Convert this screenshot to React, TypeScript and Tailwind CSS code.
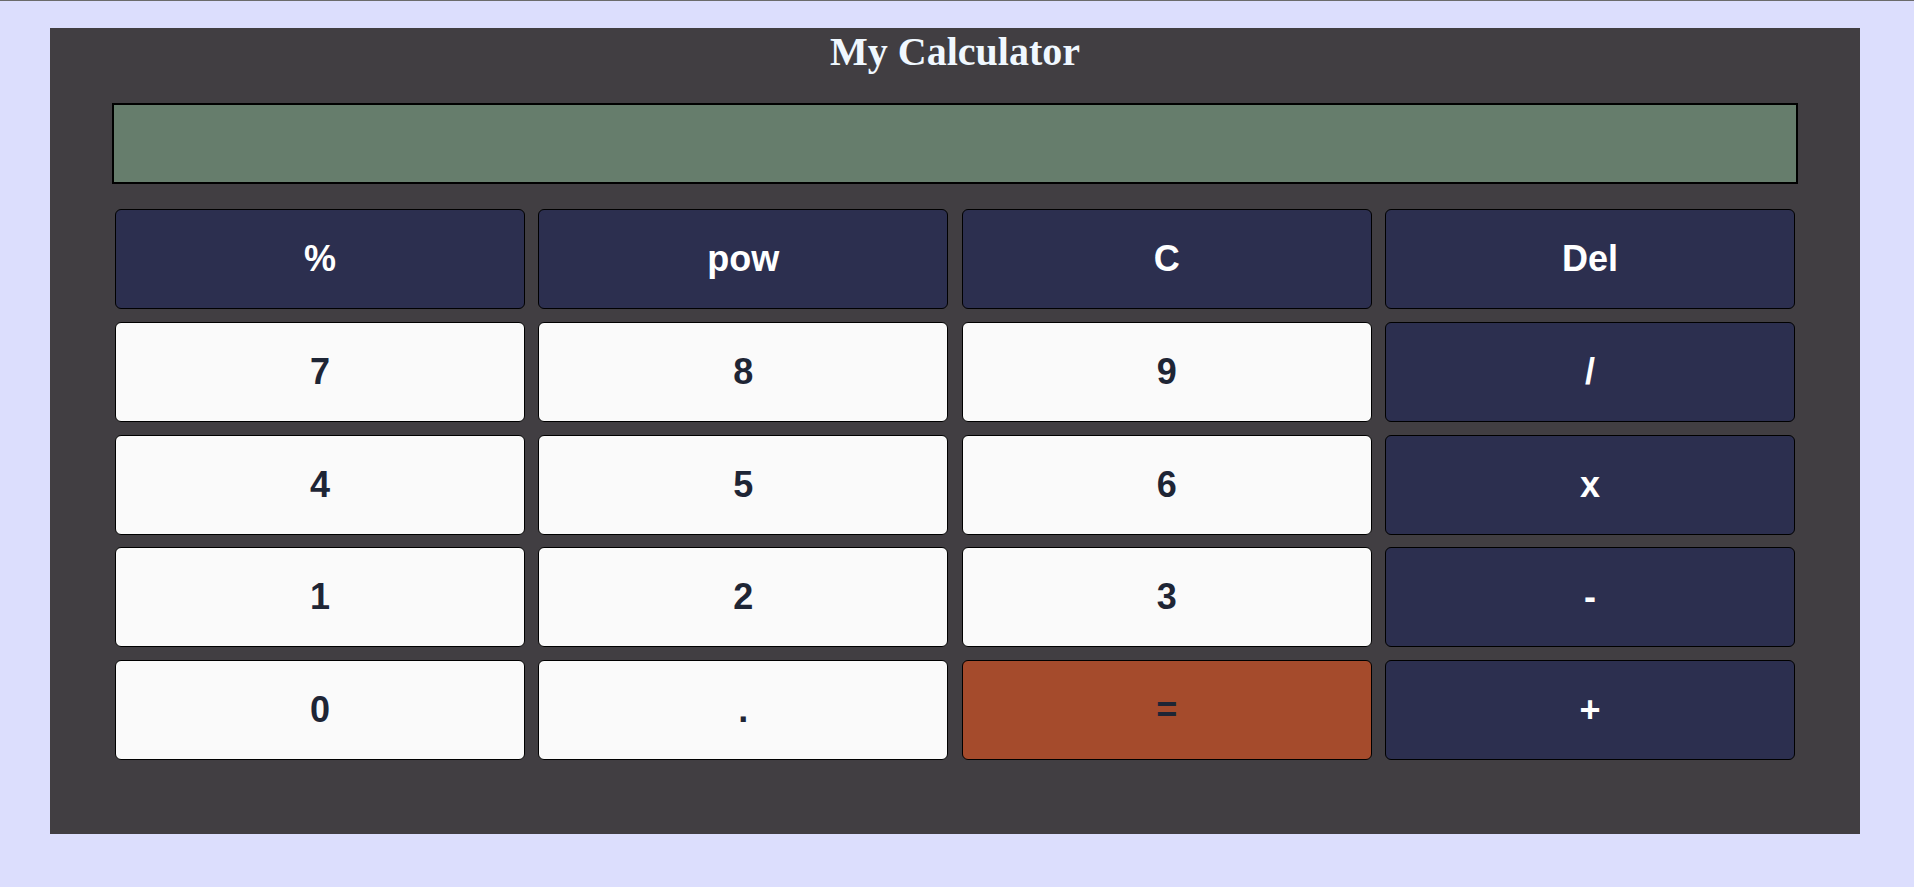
const keys: { label: string; kind: "op" | "num" | "eq" }[] = [
  { label: "%", kind: "op" },
  { label: "pow", kind: "op" },
  { label: "C", kind: "op" },
  { label: "Del", kind: "op" },
  { label: "7", kind: "num" },
  { label: "8", kind: "num" },
  { label: "9", kind: "num" },
  { label: "/", kind: "op" },
  { label: "4", kind: "num" },
  { label: "5", kind: "num" },
  { label: "6", kind: "num" },
  { label: "x", kind: "op" },
  { label: "1", kind: "num" },
  { label: "2", kind: "num" },
  { label: "3", kind: "num" },
  { label: "-", kind: "op" },
  { label: "0", kind: "num" },
  { label: ".", kind: "num" },
  { label: "=", kind: "eq" },
  { label: "+", kind: "op" },
];

const kindClass = {
  op: "bg-[#2c2f4f] text-white",
  num: "bg-[#fafafa] text-[#1e2535]",
  eq: "bg-[#a54b2c] text-[#1e2535]",
};

export default function App() {
  return (
    <div className="min-h-screen bg-[#dcdefd] border-t border-[#6b6b6b] pt-[27px] pb-[53px]">
      <div className="ml-[50px] mr-[54px] h-[806px] bg-[#413e42] px-[62px]">
        <h1 className="pt-px text-center font-['Liberation_Serif',serif] text-[40px] font-bold leading-[46px] text-[#f0f8ff]">
          My Calculator
        </h1>
        <div className="mt-[27.5px] h-[81px] border-2 border-black bg-[#667d6c]"></div>
        <div className="mt-[25.5px] grid grid-cols-4 gap-x-[13.3px] gap-y-[12.75px] px-[3px]">
          {keys.map((k) => (
            <button
              key={k.label}
              type="button"
              className={`h-[100px] rounded-[6px] border border-black font-['Liberation_Sans',Arial,sans-serif] text-[36px] font-bold ${kindClass[k.kind]}`}
            >
              {k.label}
            </button>
          ))}
        </div>
      </div>
    </div>
  );
}
